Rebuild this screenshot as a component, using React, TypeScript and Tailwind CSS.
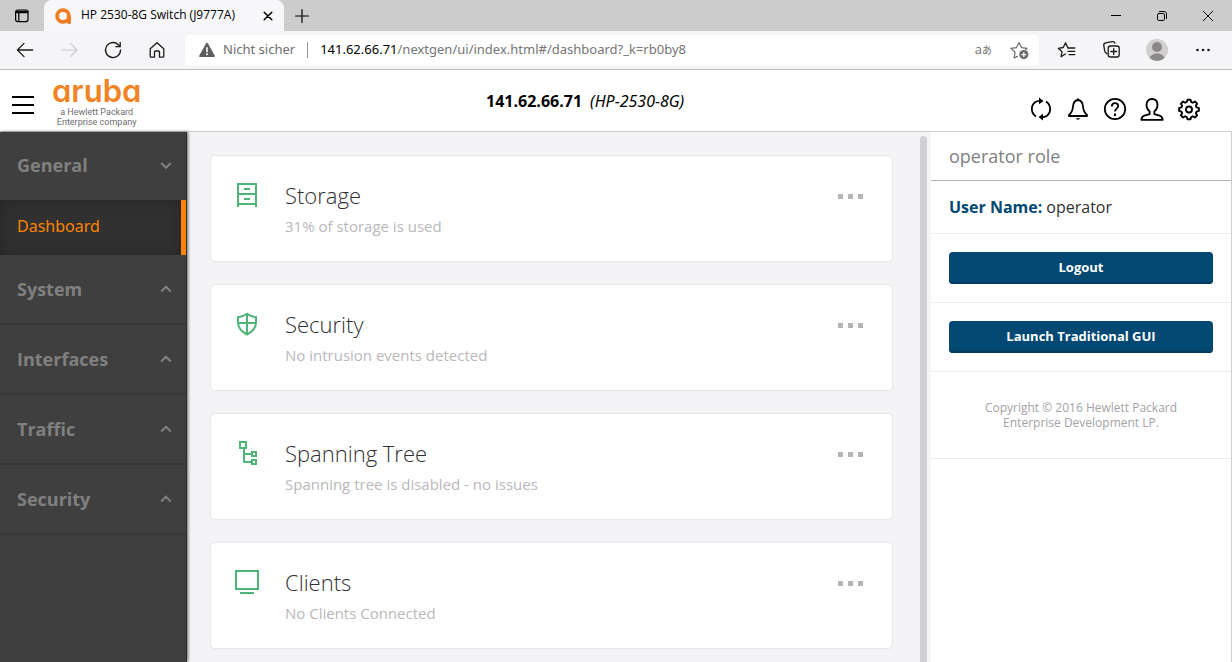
import React from "react";

type IconProps = { className?: string };

/* ---------- Browser icons ---------- */

const stroke = {
  fill: "none",
  stroke: "currentColor",
  strokeLinecap: "round" as const,
  strokeLinejoin: "round" as const,
};

function TabsIcon() {
  return (
    <svg viewBox="0 0 16 16" className="size-4" {...stroke} strokeWidth="1.2">
      <rect x="1.6" y="2" width="12.4" height="11.600" rx="2" />
      <path d="M2 3.400h12M2 4.600h12M4.800 5v8.500" />
    </svg>
  );
}

function FaviconIcon() {
  return (
    <svg viewBox="0 0 16 16" className="size-4">
      <circle cx="8" cy="8" r="5.9" fill="none" stroke="#ee7d22" strokeWidth="3.8" />
      <path d="M12.2 8H16v6.2a1.8 1.8 0 0 1-3.8 0z" fill="#ee7d22" />
    </svg>
  );
}

function CloseIcon({ className = "size-4" }: IconProps) {
  return (
    <svg viewBox="0 0 16 16" className={className} {...stroke} strokeWidth="1.5">
      <path d="M4.200 4.200l7.600 7.600M11.800 4.200l-7.600 7.600" />
    </svg>
  );
}

function PlusIcon() {
  return (
    <svg viewBox="0 0 16 16" className="size-4" {...stroke} strokeWidth="1.2">
      <path d="M8 1.500v13M1.500 8h13" />
    </svg>
  );
}

function BackIcon() {
  return (
    <svg viewBox="0 0 20 20" className="size-5" {...stroke} strokeWidth="1.3">
      <path d="M17.600 10H2.400M9 3.400L2.400 10 9 16.600" />
    </svg>
  );
}

function ForwardIcon() {
  return (
    <svg viewBox="0 0 20 20" className="size-5" {...stroke} strokeWidth="1.2">
      <path d="M2.400 10H18M11.400 3.400L18 10l-6.600 6.600" />
    </svg>
  );
}

function ReloadIcon() {
  return (
    <svg viewBox="0 0 20 20" className="size-5" {...stroke} strokeWidth="1.3">
      <path d="M17.500 10a7.500 7.500 0 1 1-2.200-5.300L17 6.400" />
      <path d="M17.200 2.400v4.300h-4.300" />
    </svg>
  );
}

function HomeIcon() {
  return (
    <svg viewBox="0 0 20 20" className="size-5" {...stroke} strokeWidth="1.3">
      <path d="M3.200 8.800L10 2.800l6.800 6v7.400a1 1 0 0 1-1 1h-3.300v-5.200a1 1 0 0 0-1-1h-3a1 1 0 0 0-1 1v5.200H4.200a1 1 0 0 1-1-1z" />
    </svg>
  );
}

function WarningIcon() {
  return (
    <svg viewBox="0 0 16 16" className="size-4">
      <path d="M7.100 1.300a1 1 0 0 1 1.800 0l6.900 12.500a.8.8 0 0 1-.7 1.200H.9a.8.8 0 0 1-.7-1.200z" fill="#5e5e5e" />
      <path d="M8 5.200v5" stroke="#fff" strokeWidth="1.600" />
      <circle cx="8" cy="12.300" r="1" fill="#fff" />
    </svg>
  );
}

function AddFavoriteIcon() {
  return (
    <svg viewBox="0 0 20 20" className="size-5">
      <path d="M7.500 16.400l-3.300 1.500.8-5.600-4-3.900 5.500-.8L9 2.600l2.500 5 5.500.8-1.400 1.300" {...stroke} strokeWidth="1.200" />
      <circle cx="13.800" cy="14.600" r="4.600" fill="currentColor" />
      <path d="M13.800 12.200V17M11.400 14.600h4.800" stroke="#fff" strokeWidth="1.200" />
    </svg>
  );
}

function FavoritesIcon() {
  return (
    <svg viewBox="0 0 20 20" className="size-5" {...stroke} strokeWidth="1.300">
      <path d="M8.400 14l-4.300 2.700.9-4.900-3.700-3.500 4.900-.8 2.300-4.600 2.300 4.600" />
      <path d="M10.800 8h7M10.800 11.300h7M12 14.600h5.800" />
    </svg>
  );
}

function CollectionsIcon() {
  return (
    <svg viewBox="0 0 20 20" className="size-5" {...stroke} strokeWidth="1.300">
      <path d="M5 13.600l-1.300-.8a3 3 0 0 1-1-2L1.800 5.600a2.300 2.300 0 0 1 1.800-2.700l6.800-1.200a2.300 2.300 0 0 1 2.600 1.500" />
      <rect x="6.200" y="6" width="11" height="11" rx="2.200" />
      <path d="M11.700 8.600v5.800M8.800 11.500h5.800" />
    </svg>
  );
}

function AvatarIcon() {
  return (
    <svg viewBox="0 0 22 22" className="size-[22px]">
      <circle cx="11" cy="11" r="11" fill="#d1cfcf" />
      <circle cx="11" cy="8" r="5" fill="#8b8888" />
      <path d="M3.600 19.100c.8-3 3.800-4.600 7.400-4.600s6.600 1.600 7.400 4.600A11 11 0 0 1 11 22a11 11 0 0 1-7.400-2.900z" fill="#8b8888" />
    </svg>
  );
}

function DotsIcon() {
  return (
    <svg viewBox="0 0 16 16" className="size-4" fill="currentColor">
      <circle cx="2.500" cy="8" r="1.300" />
      <circle cx="8" cy="8" r="1.300" />
      <circle cx="13.500" cy="8" r="1.300" />
    </svg>
  );
}

function MinimizeIcon() {
  return (
    <svg viewBox="0 0 12 12" className="size-3" stroke="currentColor">
      <path d="M1 5.500h10" />
    </svg>
  );
}

function RestoreIcon() {
  return (
    <svg viewBox="0 0 12 12" className="size-3" {...stroke}>
      <rect x="1.500" y="3.500" width="7" height="7" rx="1.400" />
      <path d="M3.500 1.500h4.800a2.200 2.200 0 0 1 2.200 2.200v4.800" />
    </svg>
  );
}

function WindowCloseIcon() {
  return (
    <svg viewBox="0 0 12 12" className="size-3" {...stroke} strokeWidth="1">
      <path d="M1.200 1.200l9.600 9.600M10.800 1.200L1.200 10.800" />
    </svg>
  );
}

/* ---------- Header icons ---------- */

function RefreshIcon() {
  return (
    <svg viewBox="0 0 24 24" className="size-6" fill="none" stroke="currentColor" strokeWidth="1.800">
      <path d="M7 19.500C1.800 16 1.500 9 6 5.300 7.500 4.200 9 3.800 11 3.800" />
      <path d="M17 4.500c5.200 3.500 5.500 10.500 1 14.200-1.500 1.100-3 1.500-5 1.500" />
      <path d="M10 .5v6.800L14.500 4z" fill="currentColor" stroke="none" />
      <path d="M14 16.700v6.800L9.500 20z" fill="currentColor" stroke="none" />
    </svg>
  );
}

function BellIcon() {
  return (
    <svg viewBox="0 0 24 24" className="size-6" fill="none" stroke="currentColor" strokeWidth="1.800" strokeLinejoin="round">
      <path d="M12 3C8.500 3.600 7.200 6 7 9.500c-.3 4.500-1.500 6.300-4 8.500v1h18v-1c-2.500-2.200-3.700-4-4-8.500-.2-3.500-1.500-5.900-5-6.500z" />
      <path d="M9.500 21.200h5L12 23z" fill="currentColor" stroke="none" />
      <path d="M9.500 3.500L12 1l2.500 2.500z" fill="currentColor" stroke="none" />
    </svg>
  );
}

function HelpIcon() {
  return (
    <svg viewBox="0 0 24 24" className="size-6" fill="none" stroke="currentColor" strokeWidth="1.800">
      <circle cx="12" cy="12" r="10.200" />
      <path d="M8.800 9.500C8.900 7.300 10.200 6.200 12 6.200s3.200 1.200 3.200 2.900c0 2.400-3.200 2.600-3.200 5.400" />
      <path d="M11 16.500h2V19h-2z" fill="currentColor" stroke="none" />
    </svg>
  );
}

function UserIcon() {
  return (
    <svg viewBox="0 0 24 24" className="size-6" fill="none" stroke="currentColor" strokeWidth="1.800" strokeLinejoin="round">
      <path d="M9.700 17.200v-2.600C7.500 12.800 6.500 10.700 6.500 8c0-3.600 2-6 5.500-6s5.500 2.400 5.500 6c0 2.700-1 4.800-3.200 6.600v2.600l5.400 1.400c1.700.5 2.700 1.800 3 4.200H1.300c.3-2.400 1.300-3.700 3-4.200z" />
    </svg>
  );
}

function GearIcon() {
  return (
    <svg viewBox="0 0 24 24" className="size-6" fill="none" stroke="currentColor" strokeWidth="1.900" strokeLinejoin="round">
      <path d="M10.500 2.700h3l.7 2.300 1.600.7 2.100-1.200 2.200 2.200-1.200 2.100.7 1.600 2.300.7v2.800l-2.300.7-.7 1.600 1.200 2.100-2.200 2.200-2.100-1.200-1.600.7-.7 2.300h-3l-.7-2.300-1.600-.7-2.100 1.200-2.200-2.200 1.200-2.100-.7-1.600-2.300-.7v-2.800l2.300-.7.7-1.600-1.200-2.100 2.200-2.200 2.100 1.200 1.600-.7z" />
      <circle cx="12" cy="12.500" r="3" />
    </svg>
  );
}

/* ---------- Card icons ---------- */

function StorageIcon() {
  return (
    <svg viewBox="0 0 24 24" className="size-6" fill="none" stroke="currentColor" strokeWidth="2">
      <path d="M3 24V1h18v23M3 11h18M3 21h18M9 6h6M9 16h6" />
    </svg>
  );
}

function ShieldIcon() {
  return (
    <svg viewBox="0 0 24 24" className="size-6" fill="none" stroke="currentColor" strokeWidth="2">
      <path d="M12 1.700c-2.500 2-5.500 3.200-9 3.500v5.300c0 5.500 3.500 9 9 12 5.500-3 9-6.500 9-12V5.200c-3.500-.3-6.500-1.500-9-3.500zM12 2v20.500M3 11h18" />
    </svg>
  );
}

function TreeIcon() {
  return (
    <svg viewBox="0 0 24 24" className="size-6" fill="none" stroke="currentColor" strokeWidth="2">
      <path d="M5 1h6v6H5zM17 11h4v4h-4zM17 19h4v4h-4zM9 7v14h8M9 13h8" />
    </svg>
  );
}

function MonitorIcon() {
  return (
    <svg viewBox="0 0 24 24" className="size-6" fill="none" stroke="currentColor" strokeWidth="2">
      <path d="M1 1h22v18H1zM5 23h14" />
    </svg>
  );
}

function Chevron({ open }: { open: boolean }) {
  return (
    <svg viewBox="0 0 12 12" className="size-3" fill="none" stroke="currentColor" strokeWidth="2">
      <path d={open ? "M1.200 3L6 7.800 10.800 3" : "M1.200 8.500L6 3.700l4.800 4.800"} />
    </svg>
  );
}

/* ---------- Page sections ---------- */

function ChromeButton({ label, className = "w-11", children }: { label: string; className?: string; children: React.ReactNode }) {
  return (
    <button type="button" aria-label={label} className={`flex shrink-0 items-center justify-center ${className}`}>
      {children}
    </button>
  );
}

function TabStrip() {
  return (
    <div className="flex h-[31px] shrink-0 bg-[#cccccc] text-black">
      <ChromeButton label="Tab actions" className="w-11 pr-px">
        <TabsIcon />
      </ChromeButton>
      <div className="flex w-60 shrink-0 items-center rounded-t-lg bg-[#f7f6f9] pr-2 pl-[11px]">
        <FaviconIcon />
        <span className="ml-[10px] flex-1 pb-px text-[12px] whitespace-nowrap">HP 2530-8G Switch (J9777A)</span>
        <button type="button" aria-label="Close tab">
          <CloseIcon />
        </button>
      </div>
      <ChromeButton label="New tab" className="w-[35px]">
        <PlusIcon />
      </ChromeButton>
      <div className="ml-auto flex pr-px">
        <ChromeButton label="Minimize" className="w-[46px]">
          <MinimizeIcon />
        </ChromeButton>
        <ChromeButton label="Restore" className="w-[46px]">
          <RestoreIcon />
        </ChromeButton>
        <ChromeButton label="Close window" className="w-[46px]">
          <WindowCloseIcon />
        </ChromeButton>
      </div>
    </div>
  );
}

function Toolbar() {
  return (
    <div className="flex h-[39px] shrink-0 items-center border-b border-[#bdbbbe] bg-[#f5f4f7] text-[#1b1b1b]">
      <div className="flex w-[185px] shrink-0 pl-[3px]">
        <ChromeButton label="Back"><BackIcon /></ChromeButton>
        <span className="text-[#c9c8ca]">
          <ChromeButton label="Forward"><ForwardIcon /></ChromeButton>
        </span>
        <ChromeButton label="Reload"><ReloadIcon /></ChromeButton>
        <ChromeButton label="Home"><HomeIcon /></ChromeButton>
      </div>
      <div className="flex h-[30px] flex-1 items-center rounded bg-white pl-[14px] font-['Noto_Sans',sans-serif] text-[13px]">
        <WarningIcon />
        <span className="ml-2 whitespace-nowrap text-[#6e6e6e]">Nicht sicher</span>
        <span className="mx-3 h-4 w-px bg-[#9a9a9a]" />
        <span className="flex-1 whitespace-nowrap text-[#757575]">
          <span className="text-black">141.62.66.71</span>/nextgen/ui/index.html#/dashboard?_k=rb0by8
        </span>
        <button type="button" className="mr-[18px] font-['Open_Sans','Noto_Sans_CJK_JP',sans-serif] text-[#6e6e6e]">
          a<span className="text-[10px]">あ</span>
        </button>
        <button type="button" aria-label="Add to favorites" className="mr-[9px] text-[#6b6b6b]">
          <AddFavoriteIcon />
        </button>
      </div>
      <div className="flex pr-[6px] pl-1">
        <ChromeButton label="Favorites" className="w-[47px]"><FavoritesIcon /></ChromeButton>
        <ChromeButton label="Collections" className="w-11"><CollectionsIcon /></ChromeButton>
        <ChromeButton label="Profile" className="w-[46px]"><AvatarIcon /></ChromeButton>
        <ChromeButton label="Settings and more" className="w-[46px]"><DotsIcon /></ChromeButton>
      </div>
    </div>
  );
}

const headerActions = [
  { label: "Refresh", icon: <RefreshIcon /> },
  { label: "Notifications", icon: <BellIcon /> },
  { label: "Help", icon: <HelpIcon /> },
  { label: "User", icon: <UserIcon /> },
  { label: "Settings", icon: <GearIcon /> },
];

function AppHeader() {
  return (
    <header className="flex h-[62px] shrink-0 items-center border-b border-[#d0ced1] bg-white text-black">
      <div className="flex items-center pl-3">
        <button type="button" aria-label="Menu" className="mt-2 flex w-[22px] flex-col gap-[6px]">
          <span className="h-[2px] bg-black" />
          <span className="h-[2px] bg-black" />
          <span className="h-[2px] bg-black" />
        </button>
        <div className="ml-[18px] flex flex-col items-center">
          <span className="font-['Inter',sans-serif] text-[31px] leading-[33px] font-semibold text-[#ee8426] [font-feature-settings:'cv11']">
            aruba
          </span>
          <span className="text-center font-['Roboto',sans-serif] text-[9px] leading-[10px] text-[#6e6e70]">
            a Hewlett Packard
            <br />
            Enterprise company
          </span>
        </div>
      </div>
      <h1 className="flex-1 text-center text-[16px]">
        <b>141.62.66.71</b>
        <i className="ml-2 font-['Noto_Sans',sans-serif]">(HP-2530-8G)</i>
      </h1>
      <div className="flex gap-[13px] pt-4 pr-[31px]">
        {headerActions.map((a) => (
          <button key={a.label} type="button" aria-label={a.label}>
            {a.icon}
          </button>
        ))}
      </div>
    </header>
  );
}

function NavGroup({ label, open = false }: { label: string; open?: boolean }) {
  return (
    <button
      type="button"
      aria-expanded={open}
      className={`flex w-full items-center justify-between pr-[14px] pl-[17px] text-[18px] font-bold text-[#808080] ${
        open ? "h-[68px] pb-px" : "h-[70px] border-b-2 border-[#373737]"
      }`}
    >
      {label}
      <Chevron open={open} />
    </button>
  );
}

function Sidebar() {
  return (
    <nav className="z-10 flex w-[187px] shrink-0 flex-col border-r border-[#2e2e2e] bg-[#3f3f3f] shadow-[1px_0_3px_rgba(0,0,0,0.6)]">
      <NavGroup label="General" open />
      <a
        href="#/dashboard"
        className="flex h-[55px] items-center border-r-[5px] border-[#ff8300] bg-[#303030] pb-[3px] pl-[17px] font-['Noto_Sans',sans-serif] text-[16px] text-[#ff8300] shadow-[inset_0_0_12px_rgba(0,0,0,0.25)]"
      >
        Dashboard
      </a>
      <NavGroup label="System" />
      <NavGroup label="Interfaces" />
      <NavGroup label="Traffic" />
      <NavGroup label="Security" />
    </nav>
  );
}

const cards = [
  { title: "Storage", text: "31% of storage is used", icon: <StorageIcon /> },
  { title: "Security", text: "No intrusion events detected", icon: <ShieldIcon /> },
  { title: "Spanning Tree", text: "Spanning tree is disabled - no issues", icon: <TreeIcon /> },
  { title: "Clients", text: "No Clients Connected", icon: <MonitorIcon /> },
];

function Dashboard() {
  return (
    <main className="flex min-w-0 flex-1 bg-[#f4f3f6] pt-1">
      <div className="flex flex-1 flex-col gap-6 pt-5 pr-7 pl-6">
        {cards.map((c) => (
          <section
            key={c.title}
            className="flex h-[105px] shrink-0 items-start rounded bg-white pr-[29px] pl-6 shadow-[0_0_2px_rgba(0,0,0,0.18)]"
          >
            <span className="mt-[27px] text-[#4fb477]">{c.icon}</span>
            <div className="mt-[26px] ml-[26px] flex-1">
              <h2 className="text-[22px] leading-[26px] font-light text-[#303033]">{c.title}</h2>
              <p className="mt-2 text-[15px] leading-5 text-[#b9b8bb]">{c.text}</p>
            </div>
            <button type="button" aria-label={`${c.title} options`} className="mt-[38px] flex gap-[5px]">
              <span className="size-[5px] bg-[#b5b4b7]" />
              <span className="size-[5px] bg-[#b5b4b7]" />
              <span className="size-[5px] bg-[#b5b4b7]" />
            </button>
          </section>
        ))}
      </div>
      <div className="mr-[4px] w-[7px] rounded-t bg-[#d0cfd1]" />
    </main>
  );
}

function PanelButton({ children }: { children: React.ReactNode }) {
  return (
    <div className="border-b border-[#ebeaec] px-[18px] py-[18px]">
      <button
        type="button"
        className="h-8 w-full rounded bg-[#014872] text-[13px] font-bold text-white shadow-[inset_0_-2px_0_#003a5c]"
      >
        {children}
      </button>
    </div>
  );
}

function UserPanel() {
  return (
    <aside className="w-[301px] shrink-0 border-r border-[#d0ced1] bg-white">
      <h2 className="flex h-[49px] items-center border-b border-[#b5b4b7] px-[18px] text-[18px] text-[#808083]">
        operator role
      </h2>
      <p className="flex h-[53px] items-center gap-1 border-b border-[#ebeaec] px-[18px] text-[16px] text-[#303033]">
        <b className="text-[#014872]">User Name:</b> operator
      </p>
      <PanelButton>Logout</PanelButton>
      <PanelButton>Launch Traditional GUI</PanelButton>
      <p className="border-b border-[#ebeaec] px-10 py-7 text-center text-[12px] leading-[15px] text-[#a3a2a5]">
        Copyright © 2016 Hewlett Packard
        <br />
        Enterprise Development LP.
      </p>
    </aside>
  );
}

export default function App() {
  return (
    <div className="flex h-screen flex-col overflow-hidden bg-white font-['Open_Sans','Noto_Sans',sans-serif]">
      <TabStrip />
      <Toolbar />
      <AppHeader />
      <div className="flex min-h-0 flex-1">
        <Sidebar />
        <Dashboard />
        <UserPanel />
      </div>
    </div>
  );
}
